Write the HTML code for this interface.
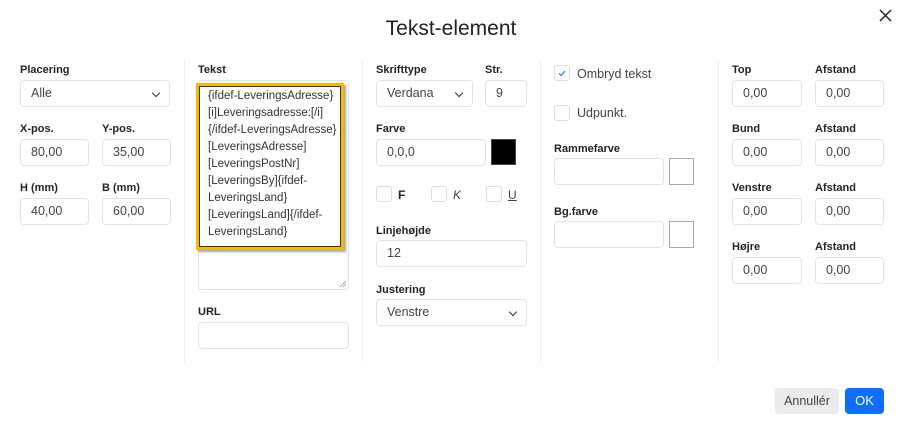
<!DOCTYPE html>
<html><head><meta charset="utf-8"><style>
*{box-sizing:border-box;margin:0;padding:0}
body{width:900px;height:432px;background:#fff;font-family:"Liberation Sans",sans-serif;color:#212529;position:relative;overflow:hidden}
.a{position:absolute}
.lbl{position:absolute;font-size:11px;font-weight:bold;color:#212529}
.in{position:absolute;border:1px solid #e3e3e3;border-radius:4px;height:27px;font-size:12.5px;color:#444;padding:0 10px;line-height:25px;background:#fff}
.div{position:absolute;top:60px;height:302px;width:1px;background:#eee}
.cb{position:absolute;width:16px;height:16px;border:1px solid #ddd;border-radius:3px;background:#fff}
.chev{position:absolute;right:10px;top:9px;width:6px;height:6px;border-right:1.3px solid #333;border-bottom:1.3px solid #333;transform:rotate(45deg)}
.sw{position:absolute;width:25px;height:27px;border:1px solid #aaa}
</style></head><body>
<div class="a" style="left:0;width:902px;top:17px;text-align:center;font-size:21px;color:#222">Tekst-element</div>
<svg class="a" style="left:879px;top:9px" width="13" height="13" viewBox="0 0 13 13"><path d="M1 1L12 12M12 1L1 12" stroke="#222" stroke-width="1.5"/></svg>

<div class="div" style="left:184px"></div>
<div class="div" style="left:362px"></div>
<div class="div" style="left:540px"></div>
<div class="div" style="left:718px"></div>

<div class="lbl" style="left:20px;top:64px">Placering</div>
<div class="in" style="left:20px;top:80px;width:150px">Alle<span class="chev"></span></div>
<div class="lbl" style="left:20px;top:123px">X-pos.</div>
<div class="lbl" style="left:102px;top:123px">Y-pos.</div>
<div class="in" style="left:20px;top:139px;width:69px">80,00</div>
<div class="in" style="left:102px;top:139px;width:69px">35,00</div>
<div class="lbl" style="left:20px;top:182px">H (mm)</div>
<div class="lbl" style="left:102px;top:182px">B (mm)</div>
<div class="in" style="left:20px;top:198px;width:69px">40,00</div>
<div class="in" style="left:102px;top:198px;width:69px">60,00</div>

<div class="lbl" style="left:198px;top:64px">Tekst</div>
<div class="in" style="left:198px;top:80px;width:151px;height:210px"></div>
<svg class="a" style="left:339px;top:280px" width="8" height="8"><path d="M1 7L7 1M4 7L7 4" stroke="#aaa"/></svg>
<div class="a" style="left:196px;top:83px;width:148px;height:167px;border:3px solid #f6b900;box-shadow:inset 1px 1px 0 #333,inset -1px -1px 0 #333,2px 2px 2px rgba(0,0,0,.35)"></div>
<div class="a" style="left:208px;top:88px;font-size:11.5px;line-height:17px;color:#333;white-space:pre">{ifdef-LeveringsAdresse}
[i]Leveringsadresse:[/i]
{/ifdef-LeveringsAdresse}
[LeveringsAdresse]
[LeveringsPostNr]
[LeveringsBy]{ifdef-
LeveringsLand}
[LeveringsLand]{/ifdef-
LeveringsLand}</div>
<div class="lbl" style="left:198px;top:306px">URL</div>
<div class="in" style="left:198px;top:322px;width:151px"></div>

<div class="lbl" style="left:376px;top:64px">Skrifttype</div>
<div class="lbl" style="left:485px;top:64px">Str.</div>
<div class="in" style="left:376px;top:80px;width:97px">Verdana<span class="chev"></span></div>
<div class="in" style="left:485px;top:80px;width:42px">9</div>
<div class="lbl" style="left:376px;top:123px">Farve</div>
<div class="in" style="left:376px;top:139px;width:110px">0,0,0</div>
<div class="a" style="left:491px;top:139px;width:25px;height:26px;background:#000;border:1px solid #444"></div>
<div class="cb" style="left:376px;top:186px"></div>
<div class="a" style="left:398px;top:188px;font-size:12px;font-weight:bold">F</div>
<div class="cb" style="left:431px;top:186px"></div>
<div class="a" style="left:453px;top:188px;font-size:12px;font-style:italic;color:#444">K</div>
<div class="cb" style="left:486px;top:186px"></div>
<div class="a" style="left:508px;top:188px;font-size:12px;text-decoration:underline;color:#444">U</div>
<div class="lbl" style="left:376px;top:225px">Linjehøjde</div>
<div class="in" style="left:376px;top:240px;width:151px">12</div>
<div class="lbl" style="left:376px;top:284px">Justering</div>
<div class="in" style="left:376px;top:299px;width:151px">Venstre<span class="chev"></span></div>

<div class="cb" style="left:554px;top:65px"><svg width="14" height="14" style="position:absolute;left:0;top:0"><path d="M4 7.5L6.2 9.5L10 5" stroke="#3b7df5" stroke-width="1.3" fill="none"/></svg></div>
<div class="a" style="left:577px;top:67px;font-size:12.5px;color:#444">Ombryd tekst</div>
<div class="cb" style="left:554px;top:105px"></div>
<div class="a" style="left:577px;top:106px;font-size:12.5px;color:#444">Udpunkt.</div>
<div class="lbl" style="left:554px;top:143px">Rammefarve</div>
<div class="in" style="left:554px;top:158px;width:110px"></div>
<div class="sw" style="left:669px;top:158px"></div>
<div class="lbl" style="left:554px;top:206px">Bg.farve</div>
<div class="in" style="left:554px;top:221px;width:110px"></div>
<div class="sw" style="left:669px;top:221px"></div>

<div class="lbl" style="left:732px;top:64px">Top</div>
<div class="lbl" style="left:815px;top:64px">Afstand</div>
<div class="in" style="left:732px;top:80px;width:70px">0,00</div>
<div class="in" style="left:815px;top:80px;width:69px">0,00</div>
<div class="lbl" style="left:732px;top:123px">Bund</div>
<div class="lbl" style="left:815px;top:123px">Afstand</div>
<div class="in" style="left:732px;top:139px;width:70px">0,00</div>
<div class="in" style="left:815px;top:139px;width:69px">0,00</div>
<div class="lbl" style="left:732px;top:182px">Venstre</div>
<div class="lbl" style="left:815px;top:182px">Afstand</div>
<div class="in" style="left:732px;top:198px;width:70px">0,00</div>
<div class="in" style="left:815px;top:198px;width:69px">0,00</div>
<div class="lbl" style="left:732px;top:241px">Højre</div>
<div class="lbl" style="left:815px;top:241px">Afstand</div>
<div class="in" style="left:732px;top:257px;width:70px">0,00</div>
<div class="in" style="left:815px;top:257px;width:69px">0,00</div>

<div class="a" style="left:775px;top:388px;width:64px;height:26px;background:#ebebeb;border-radius:4px;font-size:12.5px;color:#444;text-align:center;line-height:26px">Annullér</div>
<div class="a" style="left:845px;top:388px;width:39px;height:26px;background:#0d6efd;border-radius:4px;font-size:13px;color:#fff;text-align:center;line-height:26px">OK</div>
</body></html>
